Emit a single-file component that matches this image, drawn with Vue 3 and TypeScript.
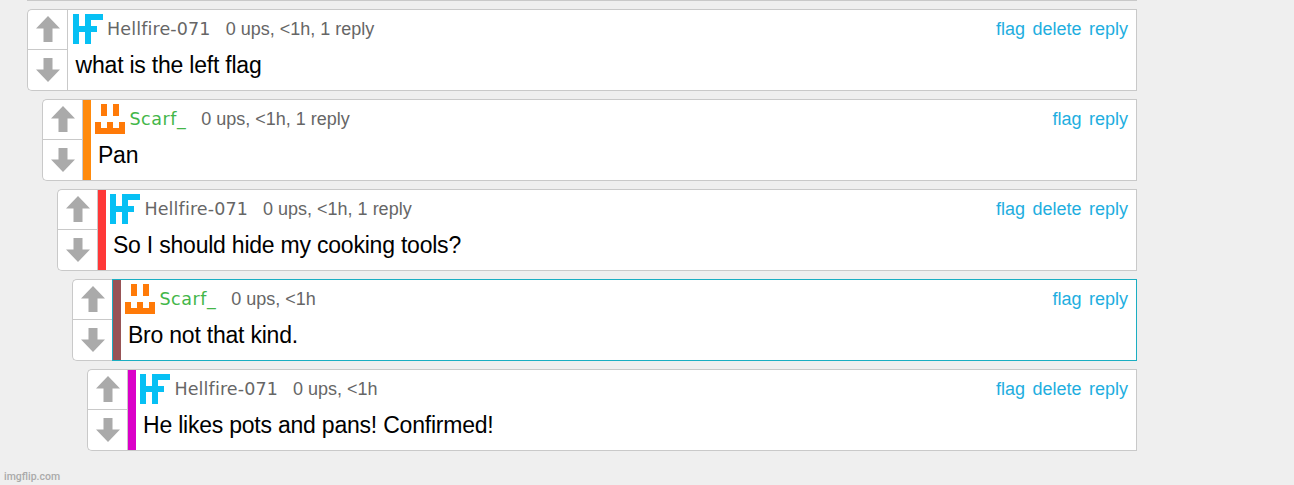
<script setup lang="ts">
interface Comment {
  user: 'Hellfire-071' | 'Scarf_'
  meta: string
  text: string
  actions: string[]
  bar: string
  active?: boolean
  size: string
}
const comments: Comment[] = [
  { user: 'Hellfire-071', meta: '0 ups, <1h, 1 reply', text: 'what is the left flag', actions: ['flag', 'delete', 'reply'], bar: '', size: 'root' },
  { user: 'Scarf_', meta: '0 ups, <1h, 1 reply', text: 'Pan', actions: ['flag', 'reply'], bar: 'orange', size: '' },
  { user: 'Hellfire-071', meta: '0 ups, <1h, 1 reply', text: 'So I should hide my cooking tools?', actions: ['flag', 'delete', 'reply'], bar: 'red', size: '' },
  { user: 'Scarf_', meta: '0 ups, <1h', text: 'Bro not that kind.', actions: ['flag', 'reply'], bar: 'brown', active: true, size: '' },
  { user: 'Hellfire-071', meta: '0 ups, <1h', text: 'He likes pots and pans! Confirmed!', actions: ['flag', 'delete', 'reply'], bar: 'magenta', size: '' },
]
</script>

<template>
  <main class="page">
    <div class="previous"></div>
    <article v-for="(c, i) in comments" :key="i" class="comment" :style="{ marginLeft: 27 + i * 15 + 'px' }">
      <div class="votes">
        <div class="vote"><svg width="24" height="26" viewBox="0 0 24 26"><path d="M12 0 24 12.5H16.5V26H7.5V12.5H0Z" /></svg></div>
        <div class="vote down"><svg width="24" height="24" viewBox="0 0 24 24"><path d="M7.5 0H16.5V11.5H24L12 24 0 11.5H7.5Z" /></svg></div>
      </div>
      <div class="box" :class="{ active: c.active }">
        <div v-if="c.bar" class="bar" :class="c.bar"></div>
        <div class="content" :class="c.size">
          <header>
            <svg v-if="c.user === 'Scarf_'" class="avatar scarf" viewBox="0 0 5 5" shape-rendering="crispEdges"><path d="M1 0H2V2H1ZM3 0H4V2H3ZM0 3H1V4H2V3H3V4H4V3H5V5H0Z" /></svg>
            <svg v-else class="avatar hell" viewBox="0 0 5 5" shape-rendering="crispEdges"><path d="M0 0H1V2H2V0H5V1H3V2H4V3H3V5H2V3H1V5H0Z" /></svg>
            <span class="name" :class="{ green: c.user === 'Scarf_' }">{{ c.user }}</span>
            <span class="meta">{{ c.meta }}</span>
            <nav><a v-for="a in c.actions" :key="a">{{ a }}</a></nav>
          </header>
          <p>{{ c.text }}</p>
        </div>
      </div>
    </article>
    <footer>imgflip.com</footer>
  </main>
</template>

<style>
body { background: #efefef; }
</style>
<style scoped>
.page { width: 1137px; height: 485px; overflow: hidden; font-family: "Liberation Sans", Arial, sans-serif; display: flex; flex-direction: column; }
.previous { height: 1px; background: #c9c9c9; margin: 0 0 8px 27px; flex: none; }
.comment { display: flex; height: 82px; margin-bottom: 8px; flex: none; }
.votes { box-sizing: border-box; width: 40px; border: 1px solid #c9c9c9; border-right: 0; border-radius: 5px 0 0 5px; background: #fff; }
.vote { box-sizing: border-box; height: 40px; padding: 6px 0 0 8px; border-bottom: 1px solid #c9c9c9; }
.vote.down { border: 0; padding-top: 8px; }
.vote svg { display: block; fill: #aaa; }
.box { box-sizing: border-box; flex: 1; display: flex; border: 1px solid #c9c9c9; background: #fff; min-width: 0; }
.box.active { border-color: #1baec2; }
.bar { width: 8px; flex: none; }
.orange { background: #ff8a0c; }
.red { background: #ff3838; }
.brown { background: #985456; }
.magenta { background: #db00c8; }
.content { flex: 1; padding: 4px 8px 0 4px; }
.content.root { padding-left: 5px; }
header { height: 30px; display: flex; align-items: center; white-space: nowrap; }
.avatar { width: 30px; height: 30px; flex: none; }
.scarf { fill: #ff7a08; }
.hell { fill: #06c0f4; }
.name { font: 17.5px/30px "DejaVu Sans", Verdana, sans-serif; letter-spacing: .14px; color: #666; margin-left: 4.4px; }
.root .name { margin-left: 4px; }
.name.green { color: #43b649; letter-spacing: .55px; }
.meta { font-size: 18px; line-height: 30px; color: #666; margin-left: 15px; }
nav { margin-left: auto; display: flex; gap: 7.5px; font-size: 18px; line-height: 30px; color: #1eaee0; }
p { margin: 4px 0 0 3px; font-size: 23px; letter-spacing: -.22px; line-height: 34px; color: #000; white-space: nowrap; }
.root p { margin-left: 2.6px; }
footer { margin: 11px 0 0 4px; font: 500 10.5px/14px Roboto, sans-serif; color: #aaa; }
</style>
